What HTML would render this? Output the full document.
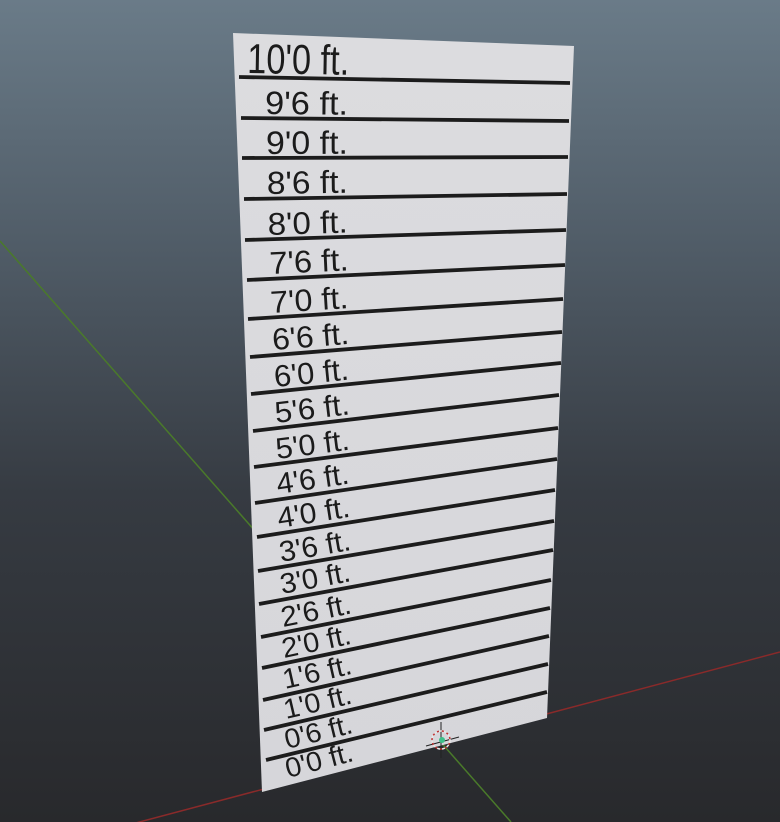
<!DOCTYPE html>
<html><head><meta charset="utf-8"><style>
html,body{margin:0;padding:0;width:780px;height:822px;overflow:hidden}
svg{display:block}
text{font-family:"Liberation Sans",sans-serif;fill:#1b1b1b}
</style></head><body>
<svg width="780" height="822" viewBox="0 0 780 822" xmlns="http://www.w3.org/2000/svg">
<defs>
<linearGradient id="bg" x1="0" y1="0" x2="0" y2="1">
<stop offset="0" stop-color="#6a7b88"/>
<stop offset="0.3" stop-color="#505c67"/>
<stop offset="0.6" stop-color="#363b42"/>
<stop offset="1" stop-color="#28292c"/>
</linearGradient>
<linearGradient id="pl" x1="0" y1="0" x2="0" y2="1">
<stop offset="0" stop-color="#dcdcdf"/>
<stop offset="1" stop-color="#d6d6da"/>
</linearGradient>
</defs>
<rect width="780" height="822" fill="url(#bg)"/>
<line x1="0" y1="241" x2="511" y2="822" stroke="#4a7a2a" stroke-width="1.5"/>
<line x1="780" y1="652" x2="0" y2="859" stroke="#8a2a2a" stroke-width="1.5"/>
<polygon points="233,33 574,46 547,718 262,792" fill="url(#pl)"/>
<g stroke="#1c1c1c" stroke-width="3.8" fill="none">
<line x1="239" y1="77" x2="570" y2="83"/>
<line x1="241" y1="118" x2="569" y2="121"/>
<line x1="242" y1="158" x2="568" y2="157"/>
<line x1="244" y1="199" x2="567" y2="194"/>
<line x1="245" y1="240" x2="566" y2="230"/>
<line x1="247" y1="280" x2="565" y2="265"/>
<line x1="248" y1="319" x2="563" y2="299"/>
<line x1="250" y1="357" x2="562" y2="332"/>
<line x1="251" y1="394" x2="561" y2="363"/>
<line x1="253" y1="431" x2="559" y2="395"/>
<line x1="254" y1="467" x2="558" y2="428"/>
<line x1="255" y1="503" x2="557" y2="459"/>
<line x1="257" y1="537" x2="555" y2="490"/>
<line x1="258" y1="571" x2="554" y2="521"/>
<line x1="259" y1="604" x2="553" y2="550"/>
<line x1="261" y1="637" x2="551" y2="580"/>
<line x1="262" y1="668" x2="550" y2="608"/>
<line x1="263" y1="700" x2="549" y2="636"/>
<line x1="264" y1="730" x2="548" y2="664"/>
<line x1="266" y1="760" x2="547" y2="692"/>
</g>
<g>
<text x="247" y="73" font-size="42" textLength="102" lengthAdjust="spacingAndGlyphs" transform="rotate(1 247 73)">10'0 ft.</text>
<text x="265" y="114" font-size="32.5" textLength="83" lengthAdjust="spacingAndGlyphs" transform="rotate(0.5 265 114)">9'6 ft.</text>
<text x="266" y="154" font-size="32.5" textLength="82" lengthAdjust="spacingAndGlyphs" transform="rotate(-0.2 266 154)">9'0 ft.</text>
<text x="267" y="194" font-size="32" textLength="81" lengthAdjust="spacingAndGlyphs" transform="rotate(-0.9 267 194)">8'6 ft.</text>
<text x="268" y="235" font-size="31.5" textLength="80" lengthAdjust="spacingAndGlyphs" transform="rotate(-1.8 268 235)">8'0 ft.</text>
<text x="270" y="274" font-size="31.5" textLength="79" lengthAdjust="spacingAndGlyphs" transform="rotate(-2.7 270 274)">7'6 ft.</text>
<text x="271" y="313" font-size="31" textLength="78" lengthAdjust="spacingAndGlyphs" transform="rotate(-3.6 271 313)">7'0 ft.</text>
<text x="273" y="350" font-size="30.5" textLength="77" lengthAdjust="spacingAndGlyphs" transform="rotate(-4.6 273 350)">6'6 ft.</text>
<text x="275" y="387" font-size="30.5" textLength="75" lengthAdjust="spacingAndGlyphs" transform="rotate(-5.7 275 387)">6'0 ft.</text>
<text x="276" y="423" font-size="30" textLength="75" lengthAdjust="spacingAndGlyphs" transform="rotate(-6.7 276 423)">5'6 ft.</text>
<text x="277" y="459" font-size="29.5" textLength="74" lengthAdjust="spacingAndGlyphs" transform="rotate(-7.3 277 459)">5'0 ft.</text>
<text x="278" y="494" font-size="29.5" textLength="73" lengthAdjust="spacingAndGlyphs" transform="rotate(-8.3 278 494)">4'6 ft.</text>
<text x="279" y="528" font-size="29" textLength="73" lengthAdjust="spacingAndGlyphs" transform="rotate(-9 279 528)">4'0 ft.</text>
<text x="281" y="562" font-size="29" textLength="72" lengthAdjust="spacingAndGlyphs" transform="rotate(-9.7 281 562)">3'6 ft.</text>
<text x="282" y="594" font-size="28.5" textLength="71" lengthAdjust="spacingAndGlyphs" transform="rotate(-10.5 282 594)">3'0 ft.</text>
<text x="283" y="627" font-size="28.5" textLength="71" lengthAdjust="spacingAndGlyphs" transform="rotate(-11.2 283 627)">2'6 ft.</text>
<text x="284" y="658" font-size="28" textLength="70" lengthAdjust="spacingAndGlyphs" transform="rotate(-11.9 284 658)">2'0 ft.</text>
<text x="285" y="689" font-size="28" textLength="70" lengthAdjust="spacingAndGlyphs" transform="rotate(-12.7 285 689)">1'6 ft.</text>
<text x="286" y="719" font-size="27.5" textLength="69" lengthAdjust="spacingAndGlyphs" transform="rotate(-13.2 286 719)">1'0 ft.</text>
<text x="287" y="749" font-size="27.5" textLength="69" lengthAdjust="spacingAndGlyphs" transform="rotate(-13.7 287 749)">0'6 ft.</text>
<text x="288" y="778" font-size="27.5" textLength="69" lengthAdjust="spacingAndGlyphs" transform="rotate(-14.6 288 778)">0'0 ft.</text>
</g>
<g>
<line x1="441" y1="722" x2="441" y2="758" stroke="#222" stroke-width="1"/>
<line x1="426" y1="746" x2="459" y2="737" stroke="#222" stroke-width="1"/>
<circle cx="441" cy="740" r="9" fill="none" stroke="#e8e8e8" stroke-width="1.5" stroke-dasharray="3 2"/>
<circle cx="441" cy="740" r="9" fill="none" stroke="#c03030" stroke-width="1.5" stroke-dasharray="2 3" stroke-dashoffset="2"/>
<circle cx="442" cy="740" r="3" fill="#3ec08a"/>
</g>
</svg>
</body></html>
